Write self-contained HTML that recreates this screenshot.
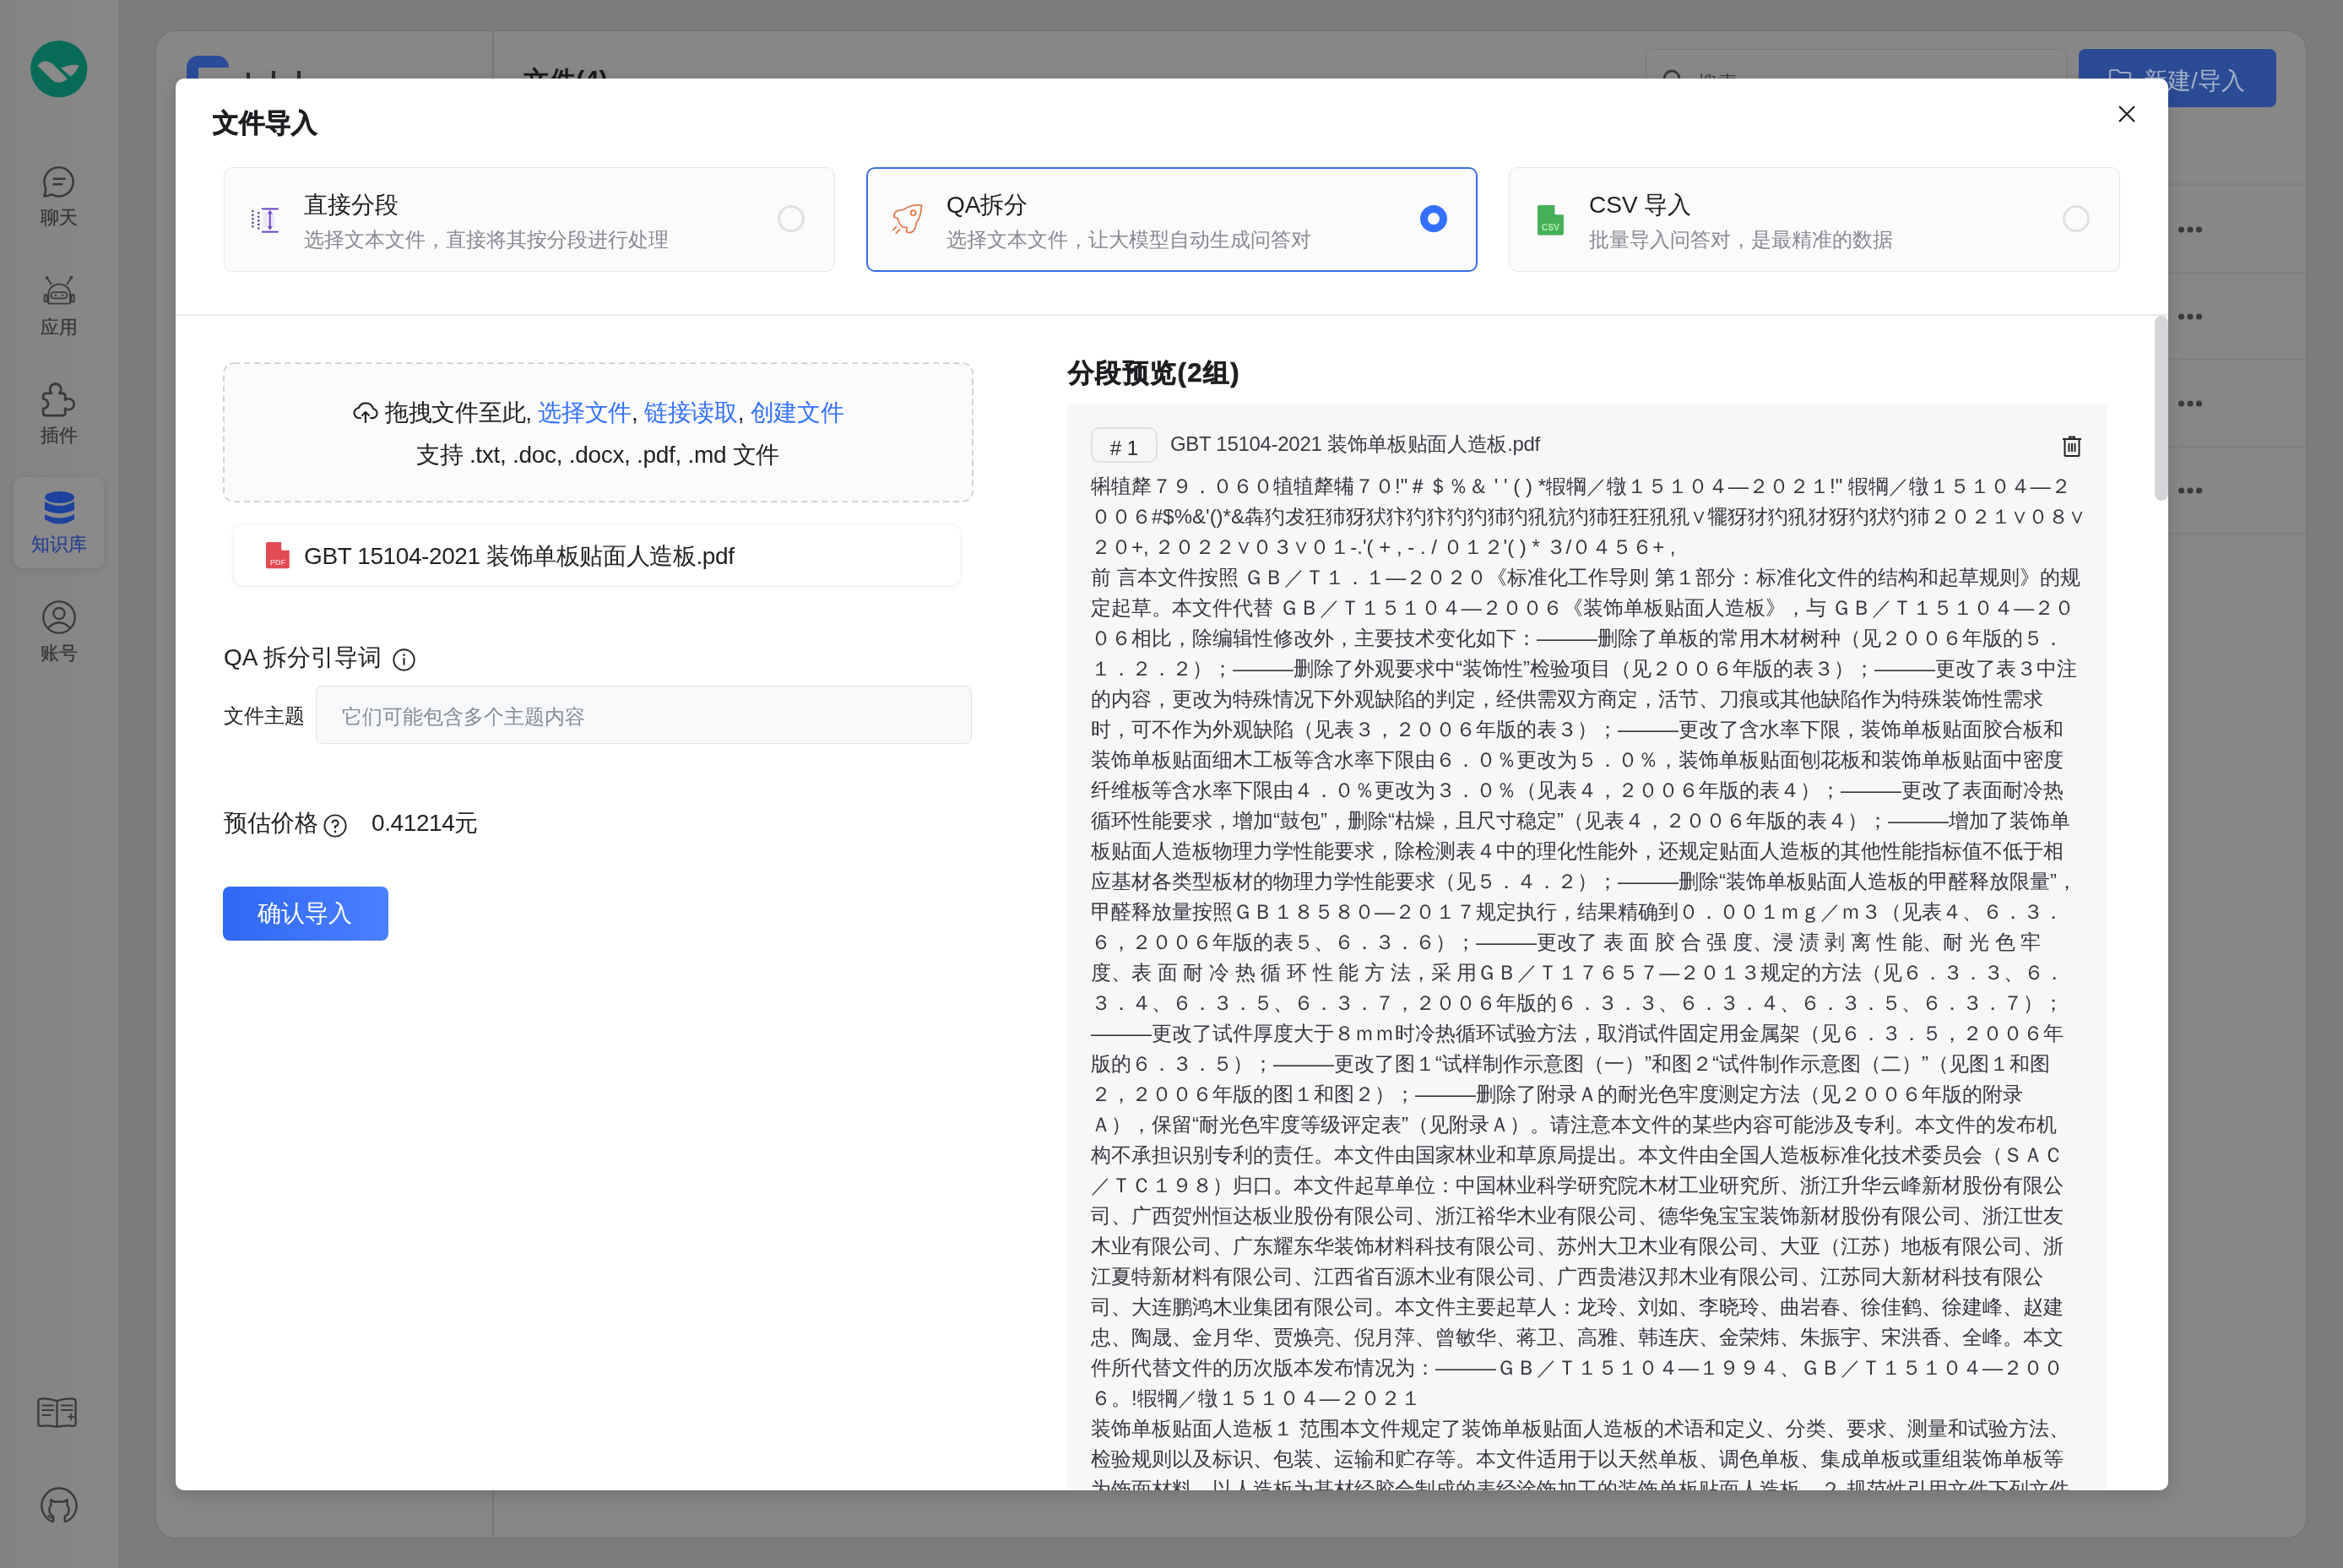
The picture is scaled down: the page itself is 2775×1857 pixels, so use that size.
<!DOCTYPE html>
<html><head><meta charset="utf-8">
<style>
html,body{margin:0;padding:0;}
body{position:relative;width:2775px;height:1857px;overflow:hidden;will-change:transform;background:#7b7b7b;font-family:"Liberation Sans",sans-serif;color:#111824;}
.a{position:absolute;}
svg{display:block;overflow:visible}
.nav{position:absolute;left:0;width:140px;text-align:center;font-size:21.5px;line-height:24px;color:#363636;-webkit-text-stroke:0.25px #363636}
.card{position:absolute;top:198px;width:724px;height:124px;box-sizing:border-box;border:1.75px solid #e6e7ea;border-radius:10px;background:#fbfbfc;}
.card .t{position:absolute;left:94px;top:26px;font-size:28px;line-height:36px;color:#1c1e22;white-space:nowrap}
.card .s{position:absolute;left:94px;top:70px;font-size:24px;line-height:30px;color:#86898f;white-space:nowrap}
.radio{position:absolute;left:655px;top:44px;width:32px;height:32px;box-sizing:border-box;border:3.2px solid #e0e1e4;border-radius:50%;}
.ln{white-space:nowrap;height:36px;line-height:36px;font-size:24px;color:#34373d;}
</style></head><body>
<!-- sidebar -->
<div class="a" style="left:0;top:0;width:140px;height:1857px;background:linear-gradient(90deg,#838383,#888888)"></div>
<!-- page card -->
<div class="a" style="left:184px;top:36px;width:2548px;height:1786px;box-sizing:border-box;border:1.5px solid #727272;border-radius:24px;background:#878787"></div>
<div class="a" style="left:583px;top:37px;width:1.5px;height:1784px;background:#767676"></div>
<!-- page header bits -->
<div class="a" style="left:221px;top:66px;width:50px;height:50px;border-radius:14px;background:#2a4b9a"></div>
<div class="a" style="left:235px;top:80px;width:36px;height:30px;background:#878787"></div>
<div class="a" style="left:292px;top:86px;width:4px;height:8px;background:#2a2a2a"></div><div class="a" style="left:322px;top:84px;width:4px;height:10px;background:#2a2a2a"></div><div class="a" style="left:352px;top:84px;width:4px;height:10px;background:#2a2a2a"></div>
<div class="a" style="left:620px;top:78px;font-size:31px;font-weight:bold;line-height:36px;color:#1a1a1c">文件(4)</div>
<div class="a" style="left:1949px;top:58px;width:499px;height:66px;box-sizing:border-box;border:1.5px solid #7a7a7a;border-radius:8px;background:#888888"></div>
<svg class="a" style="left:1969px;top:82px" width="26" height="26" viewBox="0 0 26 26" fill="none" stroke="#3a3a3a" stroke-width="2.8"><circle cx="11" cy="11" r="9"/><path d="M18 18 L24 24"/></svg>
<div class="a" style="left:2010px;top:81px;font-size:24px;line-height:36px;color:#404040">搜索</div>
<div class="a" style="left:2462px;top:58px;width:234px;height:69px;border-radius:8px;background:#2c4b95"></div>
<svg class="a" style="left:2497px;top:81px" width="28" height="24" viewBox="0 0 28 24" fill="none" stroke="#9aa8c2" stroke-width="2.2"><path d="M2 4 Q2 2 4 2 H11 L14 5 H24 Q26 5 26 7 V20 Q26 22 24 22 H4 Q2 22 2 20 Z"/></svg>
<div class="a" style="left:2539px;top:78px;font-size:28px;line-height:36px;color:#a3b1c9">新建/导入</div>
<!-- rows -->
<div class="a" style="left:585px;top:217px;width:2146px;height:1.5px;background:#808080"></div>
<div class="a" style="left:585px;top:322px;width:2146px;height:1.5px;background:#808080"></div>
<div class="a" style="left:585px;top:425px;width:2146px;height:1.5px;background:#808080"></div>
<div class="a" style="left:585px;top:528px;width:2146px;height:1.5px;background:#808080"></div>
<div class="a" style="left:585px;top:631px;width:2146px;height:1.5px;background:#808080"></div>
<svg class="a" style="left:2578px;top:262px" width="34" height="330">
 <g fill="#3a3a3a">
 <circle cx="5.5" cy="10" r="3.6"/><circle cx="16" cy="10" r="3.6"/><circle cx="26.5" cy="10" r="3.6"/>
 <circle cx="5.5" cy="113" r="3.6"/><circle cx="16" cy="113" r="3.6"/><circle cx="26.5" cy="113" r="3.6"/>
 <circle cx="5.5" cy="216" r="3.6"/><circle cx="16" cy="216" r="3.6"/><circle cx="26.5" cy="216" r="3.6"/>
 <circle cx="5.5" cy="319" r="3.6"/><circle cx="16" cy="319" r="3.6"/><circle cx="26.5" cy="319" r="3.6"/>
 </g></svg>

<!-- sidebar content -->
<svg class="a" style="left:36px;top:48px" width="68" height="68" viewBox="0 0 68 68">
 <circle cx="33.8" cy="33.6" r="33.7" fill="#086b58"/>
 <path d="M8.8 29.9 Q13 23.8 20 24.7 Q24 25.4 27 28.4 L43.8 45.2 Q39 50 32.5 49.6 Q28 49 25.5 46.5 Z" fill="#8a8a8a"/>
 <path d="M36.3 32.8 Q47 27.5 57.8 29.2 Q54 38 47.6 42.6 Z" fill="#8a8a8a"/>
</svg>
<svg class="a" style="left:44px;top:190px" width="52" height="50" viewBox="44 190 52 50" fill="none" stroke="#3a3a3a" stroke-width="2.5" stroke-linecap="round" stroke-linejoin="round">
 <path d="M53.8 222 Q55 227.2 52.2 232.4 Q57.3 232 61.4 230.4 A17.1 17.1 0 1 0 53.8 222 Z"/>
 <path d="M63.8 211.8 H76.8 M63.4 218.3 H73.2"/>
</svg>
<div class="nav" style="top:246px">聊天</div>
<svg class="a" style="left:48px;top:324px" width="44" height="40" viewBox="48 324 44 40" fill="none" stroke="#3c3c3c" stroke-width="1.9" stroke-linejoin="round">
 <circle cx="55.6" cy="328.9" r="1.9" fill="#3c3c3c" stroke="none"/><circle cx="84.4" cy="328.6" r="1.9" fill="#3c3c3c" stroke="none"/>
 <path d="M55.8 329.3 L60.9 337 M84.2 329 L79.1 337"/>
 <path d="M57.4 359.6 V348.4 A12.8 11.8 0 0 1 83 348.4 V359.6 Z"/>
 <rect x="60.5" y="346.1" width="19" height="7.3" rx="3.65"/>
 <circle cx="65.8" cy="349.7" r="1.25" fill="#3c3c3c" stroke="none"/><circle cx="74.2" cy="349.7" r="1.25" fill="#3c3c3c" stroke="none"/>
 <rect x="52.6" y="349.2" width="3.2" height="8"/><rect x="84.6" y="349.2" width="3.2" height="8"/>
</svg>
<div class="nav" style="top:376px">应用</div>
<svg class="a" style="left:46px;top:448px" width="48" height="48" viewBox="46 448 48 48" fill="none" stroke="#3a3a3a" stroke-width="2.6" stroke-linejoin="round">
 <g transform="translate(70 472) scale(1.07) translate(-70 -472)">
 <path d="M55.4 466.2 H61.6 A6.2 6.2 0 1 1 70.4 466.2 H73.8 Q76.8 466.2 76.8 469.2 V473.6 A6 6 0 1 1 76.8 483 V487.8 Q76.8 490.8 73.8 490.8 H55.4 Q52.4 490.8 52.4 487.8 V483.2 A5.4 5.4 0 1 0 52.4 472.4 V469.2 Q52.4 466.2 55.4 466.2 Z"/>
 </g>
</svg>
<div class="nav" style="top:504px">插件</div>
<div class="a" style="left:16px;top:565px;width:107px;height:108px;border-radius:10px;background:#8a8a8a;box-shadow:0 2px 8px rgba(0,0,0,0.12)"></div>
<svg class="a" style="left:53px;top:582px" width="35" height="40" viewBox="0 0 35 40">
 <g fill="#1d429e">
 <ellipse cx="17.5" cy="7" rx="17.5" ry="7"/>
 <path d="M0 12 Q17.5 22 35 12 V22 Q17.5 30 0 22 Z"/>
 <path d="M0 27 Q17.5 36 35 27 V33 Q17.5 44 0 33 Z"/>
 </g>
</svg>
<div class="nav" style="top:633px;color:#2a418e;-webkit-text-stroke:0.25px #2a418e">知识库</div>
<svg class="a" style="left:50px;top:711px" width="40" height="40" viewBox="0 0 40 40" fill="none" stroke="#3a3a3a" stroke-width="2.3">
 <circle cx="20" cy="20" r="18.7"/>
 <circle cx="20" cy="15.6" r="6.6"/>
 <path d="M6.8 33 Q20 19.5 33.2 33"/>
</svg>
<div class="nav" style="top:762px">账号</div>
<svg class="a" style="left:44px;top:1655px" width="47" height="37" viewBox="0 0 47 37" fill="none" stroke="#3a3a3a" stroke-width="2.3" stroke-linejoin="round" stroke-linecap="round">
 <path d="M23.5 4.2 Q13 0.6 4.2 1.6 Q1.4 1.9 1.4 4.7 V31.3 Q1.4 34.3 4.4 33.9 Q13 32.3 23.5 34.9 Q34 32.3 42.6 33.9 Q45.6 34.3 45.6 31.3 V4.7 Q45.6 1.9 42.8 1.6 Q34 0.6 23.5 4.2 Z M23.5 4.2 V34.9"/>
 <path d="M6.5 9.5 H19 M6.5 15 H19 M6.5 21 H15.5 M29 9.5 H41.5 M29 15 H41.5" stroke-width="2.2"/>
 <path d="M40.2 19.6 V26.2 M36.9 22.9 H43.5" stroke-width="1.7"/>
</svg>
<svg class="a" style="left:48px;top:1761px" width="44" height="44" viewBox="0 0 44 44" fill="none" stroke="#3a3a3a" stroke-width="2.4" stroke-linejoin="round">
 <path d="M15.2 41.6 A20.6 20.6 0 1 1 28.8 41.6"/>
 <path d="M15.2 41.6 V34.6 Q10.4 33 10.4 27.2 Q10.4 23.6 12.4 21.6 V15.2 L17.4 17.9 Q22 16.6 26.6 17.9 L31.6 15.2 V21.6 Q33.6 23.6 33.6 27.2 Q33.6 33 28.8 34.6 V41.6"/>
 <path d="M8.6 33.8 Q11.2 36.6 15 37" stroke-width="2"/>
</svg>

<!-- modal -->
<div class="a" style="left:208px;top:93px;width:2360px;height:1672px;border-radius:10px;background:#fff;overflow:hidden;box-shadow:0 6px 20px rgba(0,0,0,0.15)">
 <div class="a" style="left:44px;top:33px;font-size:31px;font-weight:bold;line-height:40px;color:#1e1f22;-webkit-text-stroke:0.7px #1e1f22">文件导入</div>
 <svg class="a" style="left:2301px;top:32px" width="20" height="20" viewBox="0 0 20 20" stroke="#1a1a1a" stroke-width="2.1"><path d="M1 1 L19 19 M19 1 L1 19"/></svg>

 <div class="a" style="left:0;top:279px;width:2360px;height:1.75px;background:#e8e9ec"></div>
 <div class="a" style="left:2344px;top:281px;width:16px;height:219px;border-radius:8px;background:#d4d5d8"></div>
</div>

<!-- cards (absolute in page coords) -->
<div class="card" style="left:265px">
 <svg class="a" style="left:31px;top:46px" width="34" height="32" viewBox="296 244 34 32">
  <rect x="310.6" y="250.5" width="13.5" height="17.5" fill="#ece8fb"/>
  <g fill="#4d3f86">
   <rect x="297.2" y="248" width="2.3" height="2.2"/><rect x="297.2" y="252.55" width="2.3" height="2.2"/><rect x="297.2" y="257.1" width="2.3" height="2.2"/><rect x="297.2" y="261.65" width="2.3" height="2.2"/><rect x="297.2" y="266.2" width="2.3" height="2.2"/>
   <rect x="304.1" y="250.1" width="2.3" height="2.2"/><rect x="304.1" y="254.65" width="2.3" height="2.2"/><rect x="304.1" y="259.2" width="2.3" height="2.2"/><rect x="304.1" y="263.75" width="2.3" height="2.2"/><rect x="304.1" y="268.3" width="2.3" height="2.2"/>
  </g>
  <g fill="#6a43c6">
   <rect x="309" y="245.4" width="19.7" height="2"/><rect x="309" y="272.6" width="19.7" height="2"/>
   <rect x="317.8" y="250.5" width="1.9" height="18"/>
   <path d="M318.75 247.6 L321.7 252.2 H315.8 Z M318.75 271.6 L321.7 267.2 H315.8 Z"/>
  </g>
 </svg>
 <div class="t">直接分段</div>
 <div class="s">选择文本文件，直接将其按分段进行处理</div>
 <div class="radio"></div>
</div>
<div class="card" style="left:1026px;border:2.6px solid #3a6de6">
 <svg class="a" style="left:28px;top:41px" width="37.6" height="37.6" viewBox="180 250 440 440" fill="none" stroke="#e27a4c" stroke-width="21" stroke-linecap="round" stroke-linejoin="round">
  <path d="M595 275 C500 262 420 280 345 335 L255 350 Q205 390 215 440 L265 455 Q272 520 330 575 L395 585 L385 640 Q430 672 470 640 Q522 590 520 520 Q592 430 595 275 Z"/>
  <circle cx="480" cy="380" r="35"/>
  <path d="M243 572 L198 620 M292 612 L244 662"/>
 </svg>
 <div class="t" style="left:93px;top:25px">QA拆分</div>
 <div class="s" style="left:93px;top:69px">选择文本文件，让大模型自动生成问答对</div>
 <div class="radio" style="left:654px;top:43px;border:9px solid #3370ff;background:#fff"></div>
</div>
<div class="card" style="left:1787px">
 <svg class="a" style="left:32.6px;top:44.3px" width="31" height="35.4" viewBox="0 0 31 35.4">
  <path d="M2 0 H20.4 V10 L21.8 11.3 H31 V33.4 Q31 35.4 29 35.4 H2 Q0 35.4 0 33.4 V2 Q0 0 2 0 Z" fill="#47b05a"/>
  <text x="15.6" y="30" font-size="10" font-weight="bold" fill="#b2efb9" text-anchor="middle" font-family="Liberation Sans" letter-spacing="0.3">CSV</text>
 </svg>
 <div class="t">CSV 导入</div>
 <div class="s">批量导入问答对，是最精准的数据</div>
 <div class="radio" style="left:655px"></div>
</div>

<!-- left column -->
<svg class="a" style="left:264px;top:429px" width="889" height="166"><rect x="1" y="1" width="887" height="164" rx="12" fill="#fbfbfc" stroke="#cdcfd3" stroke-width="1.75" stroke-dasharray="7.5 4.5"/></svg>
<svg class="a" style="left:419px;top:476px" width="28" height="25" viewBox="0 0 28 25" fill="none" stroke="#202226" stroke-width="2.1" stroke-linecap="round" stroke-linejoin="round">
 <path d="M8 19 H7 A6 6 0 0 1 6 7 A9 9 0 0 1 23 8 A5.5 5.5 0 0 1 21 19 H20"/>
 <path d="M14 24 V12 M10 16 L14 12 L18 16"/>
</svg>
<div class="a" style="left:456px;top:471px;font-size:28px;line-height:36px;white-space:nowrap;color:#202226;letter-spacing:-0.3px">拖拽文件至此, <span style="color:#3370ff">选择文件</span>, <span style="color:#3370ff">链接读取</span>, <span style="color:#3370ff">创建文件</span></div>
<div class="a" style="left:493px;top:521px;font-size:28px;line-height:36px;white-space:nowrap;color:#202226;letter-spacing:-0.3px">支持 .txt, .doc, .docx, .pdf, .md 文件</div>

<div class="a" style="left:277px;top:622px;width:860px;height:71px;border-radius:10px;background:#fff;box-shadow:0 1px 6px rgba(0,0,0,0.10)"></div>
<svg class="a" style="left:315.2px;top:642.2px" width="27.8" height="31.3" viewBox="0 0 27.8 31.3">
 <path d="M1.8 0 H18.2 V8.5 L19.6 9.8 H27.8 V29.5 Q27.8 31.3 26 31.3 H1.8 Q0 31.3 0 29.5 V1.8 Q0 0 1.8 0 Z" fill="#e24b53"/>
 <text x="13.9" y="26.8" font-size="9" font-weight="bold" fill="#ffc2c6" text-anchor="middle" font-family="Liberation Sans">PDF</text>
</svg>
<div class="a" style="left:360px;top:641px;font-size:28px;line-height:36px;white-space:nowrap;color:#202226;letter-spacing:-0.4px">GBT 15104-2021 装饰单板贴面人造板.pdf</div>

<div class="a" style="left:265px;top:761px;font-size:28px;line-height:36px;white-space:nowrap;color:#202226">QA 拆分引导词</div>
<svg class="a" style="left:465px;top:768px" width="27" height="27" viewBox="0 0 27 27" fill="none" stroke="#202226" stroke-width="2.2">
 <circle cx="13.5" cy="13.5" r="12.2" stroke-width="1.9"/><path d="M13.5 11.2 V19.6" stroke-width="2.1"/><circle cx="13.5" cy="7.6" r="1.3" fill="#202226" stroke="none"/>
</svg>
<div class="a" style="left:265px;top:830px;font-size:24px;line-height:36px;white-space:nowrap;color:#202226">文件主题</div>
<div class="a" style="left:374px;top:812px;width:777px;height:69px;box-sizing:border-box;border:1.75px solid #dfe2e6;border-radius:8px;background:#f7f8fa"></div>
<div class="a" style="left:405px;top:831px;font-size:24px;line-height:36px;white-space:nowrap;color:#858c97">它们可能包含多个主题内容</div>

<div class="a" style="left:265px;top:957px;font-size:28px;line-height:36px;white-space:nowrap;color:#202226">预估价格</div>
<svg class="a" style="left:383px;top:964px" width="28" height="28" viewBox="0 0 28 28" fill="none" stroke="#202226" stroke-width="2.2">
 <circle cx="14" cy="14" r="12.6" stroke-width="1.9"/><path d="M10.5 11 A3.5 3.5 0 1 1 14 14.5 V17" stroke-width="2"/><circle cx="14" cy="21" r="1.4" fill="#202226" stroke="none"/>
</svg>
<div class="a" style="left:440px;top:957px;font-size:28px;line-height:36px;white-space:nowrap;color:#202226;letter-spacing:-0.4px">0.41214元</div>
<div class="a" style="left:264px;top:1050px;width:196px;height:64px;border-radius:8px;background:linear-gradient(90deg,#3068f5,#4a80ff)"></div>
<div class="a" style="left:305px;top:1064px;font-size:28px;line-height:36px;white-space:nowrap;color:#fff">确认导入</div>

<!-- right column -->
<div class="a" style="left:1265px;top:422px;font-size:31px;font-weight:bold;line-height:40px;white-space:nowrap;color:#1e1f22;letter-spacing:1.4px;-webkit-text-stroke:0.7px #1e1f22">分段预览(2组)</div>
<div class="a" style="left:1264px;top:478px;width:1232px;height:1287px;border-radius:5px 5px 0 0;background:#f7f7f8;overflow:hidden">
 <div class="a" style="left:28px;top:28px;width:79px;height:42px;box-sizing:border-box;border:2px solid #e1e1e3;border-radius:10px;text-align:center;font-size:24px;line-height:46px;color:#25272c"># 1</div>
 <div class="a" style="left:122px;top:30px;font-size:24px;line-height:36px;white-space:nowrap;color:#383b42;letter-spacing:-0.3px">GBT 15104-2021 装饰单板贴面人造板.pdf</div>
 <svg class="a" style="left:1179px;top:38px" width="22" height="25" viewBox="0 0 22 25" fill="none" stroke="#202226" stroke-width="2">
  <path d="M0 4 H22 M8 4 V1.5 H14 V4 M2.5 4 V23 Q2.5 24 3.5 24 H18.5 Q19.5 24 19.5 23 V4 M7.5 9 V19 M11 9 V19 M14.5 9 V19"/>
 </svg>
 <div class="a" style="left:28px;top:80px">
<div class="ln">犐犆犛７９．０６０犆犆犛犕７０!"＃＄％＆ ' ' ( ) *犌犅／犜１５１０４—２０２１!" 犌犅／犜１５１０４—２</div>
<div class="ln">００６#$%&'()*&犇犳犮狂犻犽犾犿犳犿犳犳犻犳犼犺犳犻狂狂犼犼∨犤犽犲犳犼犲犽犳犾犳犻２０２１∨０８∨</div>
<div class="ln">２０+, ２０２２∨０３∨０１-.'( + , - . / ０１２'( ) * ３/０４５６+ ,</div>
<div class="ln">前 言本文件按照 ＧＢ／Ｔ１．１—２０２０《标准化工作导则 第１部分：标准化文件的结构和起草规则》的规</div>
<div class="ln">定起草。本文件代替 ＧＢ／Ｔ１５１０４—２００６《装饰单板贴面人造板》，与 ＧＢ／Ｔ１５１０４—２０</div>
<div class="ln">０６相比，除编辑性修改外，主要技术变化如下：———删除了单板的常用木材树种（见２００６年版的５．</div>
<div class="ln">１．２．２）；———删除了外观要求中“装饰性”检验项目（见２００６年版的表３）；———更改了表３中注</div>
<div class="ln">的内容，更改为特殊情况下外观缺陷的判定，经供需双方商定，活节、刀痕或其他缺陷作为特殊装饰性需求</div>
<div class="ln">时，可不作为外观缺陷（见表３，２００６年版的表３）；———更改了含水率下限，装饰单板贴面胶合板和</div>
<div class="ln">装饰单板贴面细木工板等含水率下限由６．０％更改为５．０％，装饰单板贴面刨花板和装饰单板贴面中密度</div>
<div class="ln">纤维板等含水率下限由４．０％更改为３．０％（见表４，２００６年版的表４）；———更改了表面耐冷热</div>
<div class="ln">循环性能要求，增加“鼓包”，删除“枯燥，且尺寸稳定”（见表４，２００６年版的表４）；———增加了装饰单</div>
<div class="ln">板贴面人造板物理力学性能要求，除检测表４中的理化性能外，还规定贴面人造板的其他性能指标值不低于相</div>
<div class="ln">应基材各类型板材的物理力学性能要求（见５．４．２）；———删除“装饰单板贴面人造板的甲醛释放限量”，</div>
<div class="ln">甲醛释放量按照ＧＢ１８５８０—２０１７规定执行，结果精确到０．００１ｍｇ／ｍ３（见表４、６．３．</div>
<div class="ln">６，２００６年版的表５、６．３．６）；———更改了 表 面 胶 合 强 度、浸 渍 剥 离 性 能、耐 光 色 牢</div>
<div class="ln">度、表 面 耐 冷 热 循 环 性 能 方 法，采 用ＧＢ／Ｔ１７６５７—２０１３规定的方法（见６．３．３、６．</div>
<div class="ln">３．４、６．３．５、６．３．７，２００６年版的６．３．３、６．３．４、６．３．５、６．３．７）；</div>
<div class="ln">———更改了试件厚度大于８ｍｍ时冷热循环试验方法，取消试件固定用金属架（见６．３．５，２００６年</div>
<div class="ln">版的６．３．５）；———更改了图１“试样制作示意图（一）”和图２“试件制作示意图（二）”（见图１和图</div>
<div class="ln">２，２００６年版的图１和图２）；———删除了附录Ａ的耐光色牢度测定方法（见２００６年版的附录</div>
<div class="ln">Ａ），保留“耐光色牢度等级评定表”（见附录Ａ）。请注意本文件的某些内容可能涉及专利。本文件的发布机</div>
<div class="ln">构不承担识别专利的责任。本文件由国家林业和草原局提出。本文件由全国人造板标准化技术委员会（ＳＡＣ</div>
<div class="ln">／ＴＣ１９８）归口。本文件起草单位：中国林业科学研究院木材工业研究所、浙江升华云峰新材股份有限公</div>
<div class="ln">司、广西贺州恒达板业股份有限公司、浙江裕华木业有限公司、德华兔宝宝装饰新材股份有限公司、浙江世友</div>
<div class="ln">木业有限公司、广东耀东华装饰材料科技有限公司、苏州大卫木业有限公司、大亚（江苏）地板有限公司、浙</div>
<div class="ln">江夏特新材料有限公司、江西省百源木业有限公司、广西贵港汉邦木业有限公司、江苏同大新材科技有限公</div>
<div class="ln">司、大连鹏鸿木业集团有限公司。本文件主要起草人：龙玲、刘如、李晓玲、曲岩春、徐佳鹤、徐建峰、赵建</div>
<div class="ln">忠、陶晟、金月华、贾焕亮、倪月萍、曾敏华、蒋卫、高雅、韩连庆、金荣炜、朱振宇、宋洪香、全峰。本文</div>
<div class="ln">件所代替文件的历次版本发布情况为：———ＧＢ／Ｔ１５１０４—１９９４、ＧＢ／Ｔ１５１０４—２００</div>
<div class="ln">６。!犌犅／犜１５１０４—２０２１</div>
<div class="ln">装饰单板贴面人造板１ 范围本文件规定了装饰单板贴面人造板的术语和定义、分类、要求、测量和试验方法、</div>
<div class="ln">检验规则以及标识、包装、运输和贮存等。本文件适用于以天然单板、调色单板、集成单板或重组装饰单板等</div>
<div class="ln">为饰面材料，以人造板为基材经胶合制成的表经涂饰加工的装饰单板贴面人造板。２ 规范性引用文件下列文件</div>
 </div>
</div>
</body></html>
